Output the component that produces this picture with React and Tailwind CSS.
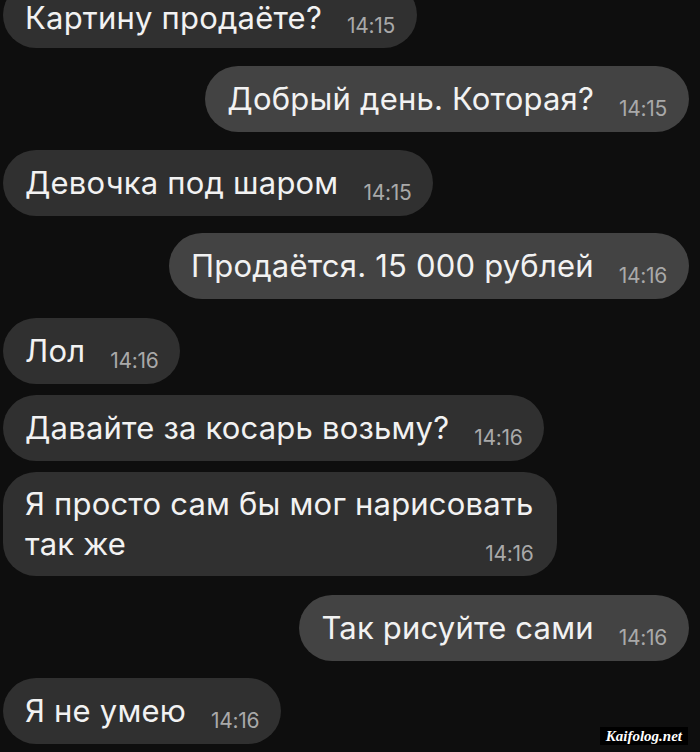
import React from 'react';

const messages = [
  { id: 1, mine: false, text: 'Картину продаёте?', time: '14:15', gap: 'mt-[-18px]', cut: true },
  { id: 2, mine: true, text: 'Добрый день. Которая?', time: '14:15', gap: 'mt-[18px]' },
  { id: 3, mine: false, text: 'Девочка под шаром', time: '14:15', gap: 'mt-[18px]' },
  { id: 4, mine: true, text: 'Продаётся. 15 000 рублей', time: '14:16', gap: 'mt-[17px]' },
  { id: 5, mine: false, text: 'Лол', time: '14:16', gap: 'mt-[19px]' },
  { id: 6, mine: false, text: 'Давайте за косарь возьму?', time: '14:16', gap: 'mt-[11px]' },
  { id: 7, mine: false, lines: ['Я просто сам бы мог нарисовать', 'так же'], time: '14:16', gap: 'mt-[11px]' },
  { id: 8, mine: true, text: 'Так рисуйте сами', time: '14:16', gap: 'mt-[19px]' },
  { id: 9, mine: false, text: 'Я не умею', time: '14:16', gap: 'mt-[17px]' },
];

const Time = ({ children }) => (
  <span className="text-[21px] leading-[21px] tracking-[-0.3px] text-[#a9a9a9] whitespace-nowrap">{children}</span>
);

const Bubble = ({ msg }) => {
  const side = msg.mine
    ? 'self-end mr-[11px] bg-[#434343]'
    : 'self-start ml-[3px] bg-[#303030]';

  // two-line message: time sits at the end of the last line
  if (msg.lines) {
    return (
      <div className={`${msg.gap} ${side} rounded-[33px] pl-[22px] pr-[23px] py-[12px] text-[#f2f2f2]`}>
        <div className="text-[31px] leading-[40px] tracking-[0.2px] whitespace-nowrap">{msg.lines[0]}</div>
        <div className="flex items-end justify-between">
          <span className="text-[31px] leading-[40px] tracking-[0.2px]">{msg.lines[1]}</span>
          <Time>{msg.time}</Time>
        </div>
      </div>
    );
  }

  // first bubble is partly scrolled off the top
  const pad = msg.cut ? 'pt-[18px] pb-[12px]' : 'py-[13px]';
  const lead = msg.cut ? 'leading-[36px]' : 'leading-[40px]';

  return (
    <div className={`${msg.gap} ${side} ${pad} flex items-end gap-[25px] h-[66px] rounded-[33px] pl-[22px] pr-[22px] text-[#f2f2f2]`}>
      <span className={`text-[31px] ${lead} tracking-[0.2px] whitespace-nowrap`}>{msg.text}</span>
      <Time>{msg.time}</Time>
    </div>
  );
};

const App = () => {
  return (
    <div
      className="relative w-[700px] h-[752px] overflow-hidden bg-[#0e0e0e]"
      style={{ fontFamily: 'Inter, "Noto Sans", sans-serif' }}
    >
      <div className="flex flex-col">
        {messages.map((m) => (
          <Bubble key={m.id} msg={m} />
        ))}
      </div>

      {/* watermark */}
      <div className="absolute right-[12px] bottom-[7px] bg-black px-[6px] h-[18px] flex items-center">
        <span
          className="text-white text-[15px] font-bold italic leading-none"
          style={{ fontFamily: '"Liberation Serif", serif' }}
        >
          Kaifolog.net
        </span>
      </div>
    </div>
  );
};

export default App;
